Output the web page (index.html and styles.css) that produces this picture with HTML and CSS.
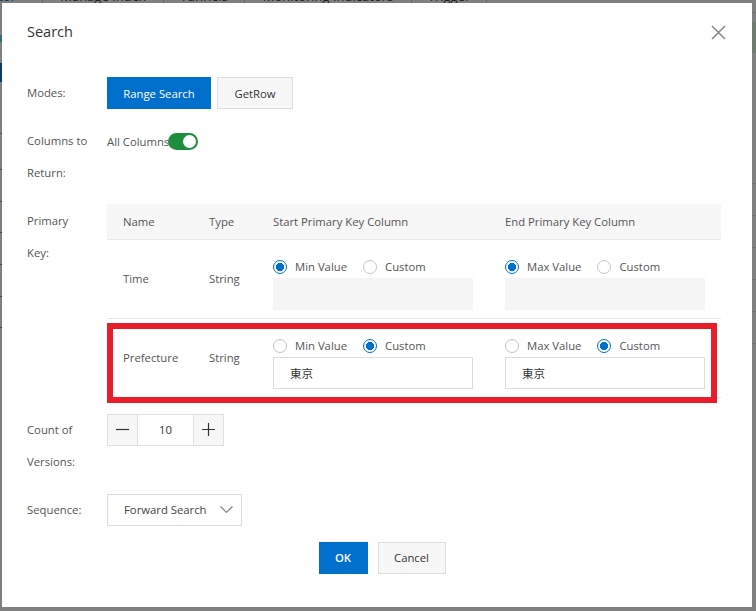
FILE: index.html
```html
<!DOCTYPE html>
<html lang="en">
<head>
<meta charset="utf-8">
<title>Search</title>
<link rel="stylesheet" href="styles.css">
</head>
<body>
<div class="page">
  <div class="tabs">
    <div class="tab tab-first">Data Editor</div>
    <div class="tab tab-w121">Manage Index</div>
    <div class="tab tab-w81">Tunnels</div>
    <div class="tab tab-w167">Monitoring Indicators</div>
    <div class="tab tab-w75">Trigger</div>
  </div>
</div>

<div class="modal">
  <div class="modal-header">
    <div class="modal-title">Search</div>
    <button class="close" aria-label="Close">
      <svg width="15" height="15" viewBox="0 0 15 15"><path d="M1 1 L14 14 M14 1 L1 14" stroke="#8a8a8a" stroke-width="1.6" fill="none"/></svg>
    </button>
  </div>

  <div class="modal-body">
    <div class="form-item">
      <div class="label">Modes:</div>
      <div class="control modes">
        <button class="btn btn-primary mode-range">Range Search</button>
        <button class="btn mode-get">GetRow</button>
      </div>
    </div>

    <div class="form-item tight">
      <div class="label">Columns to<br>Return:</div>
      <div class="control">
        <div class="switch-line">All Columns<span class="switch"><span class="knob"></span></span></div>
      </div>
    </div>

    <div class="form-item">
      <div class="label label-table">Primary<br>Key:</div>
      <div class="control">
        <table class="pk-table">
          <colgroup>
            <col class="c-name"><col class="c-type"><col class="c-range"><col class="c-range">
          </colgroup>
          <thead>
            <tr><th>Name</th><th>Type</th><th>Start Primary Key Column</th><th>End Primary Key Column</th></tr>
          </thead>
          <tbody>
            <tr>
              <td class="mid">Time</td>
              <td class="mid">String</td>
              <td>
                <div class="radios">
                  <span class="radio"><span class="dot checked"></span>Min Value</span>
                  <span class="radio"><span class="dot"></span>Custom</span>
                </div>
                <div class="input disabled"></div>
              </td>
              <td>
                <div class="radios">
                  <span class="radio"><span class="dot checked"></span>Max Value</span>
                  <span class="radio"><span class="dot"></span>Custom</span>
                </div>
                <div class="input disabled"></div>
              </td>
            </tr>
            <tr>
              <td class="mid">Prefecture</td>
              <td class="mid">String</td>
              <td>
                <div class="radios">
                  <span class="radio"><span class="dot"></span>Min Value</span>
                  <span class="radio"><span class="dot checked"></span>Custom</span>
                </div>
                <div class="input">東京</div>
              </td>
              <td>
                <div class="radios">
                  <span class="radio"><span class="dot"></span>Max Value</span>
                  <span class="radio"><span class="dot checked"></span>Custom</span>
                </div>
                <div class="input">東京</div>
              </td>
            </tr>
          </tbody>
        </table>
      </div>
    </div>

    <div class="form-item">
      <div class="label">Count of<br>Versions:</div>
      <div class="control">
        <div class="stepper">
          <button class="step-btn" aria-label="decrease"><svg width="13" height="13" viewBox="0 0 13 13"><path d="M0 6.5 H13" stroke="#333" stroke-width="1.2"/></svg></button>
          <div class="step-val">10</div>
          <button class="step-btn" aria-label="increase"><svg width="13" height="13" viewBox="0 0 13 13"><path d="M0 6.5 H13 M6.5 0 V13" stroke="#333" stroke-width="1.2"/></svg></button>
        </div>
      </div>
    </div>

    <div class="form-item">
      <div class="label">Sequence:</div>
      <div class="control">
        <div class="select">
          <span>Forward Search</span>
          <svg width="13" height="7" viewBox="0 0 13 7"><path d="M0.5 0.5 L6.5 6.3 L12.5 0.5" stroke="#777" stroke-width="1.1" fill="none"/></svg>
        </div>
      </div>
    </div>
  </div>

  <div class="modal-footer">
    <button class="btn btn-primary btn-ok">OK</button>
    <button class="btn btn-cancel">Cancel</button>
  </div>

  <div class="highlight"></div>
</div>
</body>
</html>
```

FILE: styles.css
```css
* { box-sizing: border-box; }

html, body {
  margin: 0;
  padding: 0;
}

body {
  width: 756px;
  height: 611px;
  overflow: hidden;
  font-family: "Open Sans", "Noto Sans CJK JP", sans-serif;
  background:
    linear-gradient(to bottom,
      transparent 0 35px, #3a6c78 35px 42px, transparent 42px 63px,
      #0b3d6c 63px 82px, transparent 82px 133px, #7a3d3d 133px 134px,
      transparent 134px 169px, #4a4a4a 169px 170px, transparent 170px 201px,
      #4a4a4a 201px 202px, transparent 202px 232px, #4a4a4a 232px 233px,
      transparent 233px 264px, #4a4a4a 264px 265px, transparent 265px 296px,
      #4a4a4a 296px 297px, transparent 297px 327px, #4a4a4a 327px 328px,
      transparent 328px) no-repeat 0 0 / 2px 611px,
    linear-gradient(to bottom,
      transparent 0 12px, #6e6e6e 12px 13px, transparent 13px 22px,
      #6f7a70 22px 53px, transparent 53px 183px, #707070 183px 184px,
      transparent 184px 215px, #707070 215px 216px, transparent 216px 247px,
      #707070 247px 248px, transparent 248px 279px, #707070 279px 280px,
      transparent 280px 311px, #707070 311px 312px, transparent 312px 343px,
      #707070 343px 344px, transparent 344px) no-repeat 752px 0 / 4px 611px,
    #808080;
}

/* background page (dimmed by the mask) */
.page {
  height: 611px;
}

.tabs {
  display: flex;
  margin-top: -12px;
  height: 16px;
  line-height: 16px;
  font-size: 13px;
  color: #1e1e1e;
  white-space: nowrap;
}

.tab {
  border-right: 1px solid #676767;
  text-align: center;
  flex: none;
}

.tab-first {
  width: 43px;
  display: flex;
  justify-content: flex-end;
  padding-right: 26px;
  color: #0d3b66;
}

.tab-w121 { width: 121px; }
.tab-w81 { width: 81px; }
.tab-w167 { width: 167px; }
.tab-w75 { width: 75px; }

/* modal */
.modal {
  position: absolute;
  left: 2px;
  top: 3px;
  width: 750px;
  height: 604px;
  background: #fff;
  display: flex;
  flex-direction: column;
}

.modal-header {
  display: flex;
  justify-content: space-between;
  align-items: center;
  padding: 18px 26px 0 25px;
  height: 41px;
}

.modal-title {
  font-size: 14.5px;
  line-height: 22px;
  color: #333;
  margin-top: -1px;
}

.close {
  border: 0;
  background: none;
  padding: 0;
  width: 15px;
  height: 15px;
  display: flex;
}

.modal-body {
  padding: 33px 31px 0 25px;
}

.form-item {
  display: flex;
  margin-bottom: 16px;
}

.form-item.tight {
  margin-bottom: 15px;
}

.label {
  width: 80px;
  flex: none;
  font-size: 11.3px;
  line-height: 32px;
  color: #555;
}

.label-table {
  padding-top: 1px;
}

.control {
  flex: 1;
  min-width: 0;
}

.modes {
  display: flex;
  gap: 6px;
}

.btn {
  height: 32px;
  font-family: inherit;
  font-size: 11.3px;
  border: 1px solid #dedede;
  background: #f7f7f7;
  color: #333;
  padding: 0 12px;
}

.btn-primary {
  background: #0070cc;
  border-color: #0070cc;
  color: #fff;
}

.mode-range { width: 104px; }
.mode-get { width: 76px; }

.switch-line {
  display: flex;
  align-items: center;
  height: 32px;
  font-size: 11.3px;
  color: #555;
}

.switch {
  width: 30px;
  height: 17px;
  border-radius: 9px;
  background: #1e8e3e;
  display: flex;
  justify-content: flex-end;
  align-items: center;
  padding-right: 2px;
  margin-left: -1px;
}

.knob {
  width: 13px;
  height: 13px;
  border-radius: 50%;
  background: #fff;
}

/* table */
.pk-table {
  width: 100%;
  border-collapse: collapse;
  table-layout: fixed;
  font-size: 11.3px;
  color: #555;
}

.c-name { width: 86px; }
.c-type { width: 64px; }
.c-range { width: 232px; }

.pk-table th {
  height: 35px;
  background: #f7f7f7;
  font-weight: normal;
  text-align: left;
  padding: 0 16px;
  border-bottom: 1px solid #e8e8e8;
}

.pk-table td {
  padding: 17px 16px 8px;
  border-bottom: 1px solid #e8e8e8;
  vertical-align: top;
}

.pk-table td.mid {
  vertical-align: middle;
  padding-top: 12px;
  padding-bottom: 12px;
}

.radios {
  display: flex;
  align-items: center;
  height: 20px;
  margin-bottom: 1px;
}

.radio {
  display: inline-flex;
  align-items: center;
  margin-right: 16px;
  color: #555;
}

.dot {
  width: 14px;
  height: 14px;
  border-radius: 50%;
  border: 1px solid #c4c4c4;
  background: #fff;
  margin-right: 8px;
  flex: none;
}

.dot.checked {
  border-color: #0070cc;
  background: radial-gradient(circle, #0070cc 0 3.8px, #fff 4.4px);
}

.input {
  height: 32px;
  width: 100%;
  border: 1px solid #dcdcdc;
  padding: 0 16px;
  line-height: 30px;
  font-size: 11.5px;
  color: #333;
  font-family: "Noto Sans CJK JP", "Open Sans", sans-serif;
}

.input.disabled {
  background: #f5f5f5;
  border-color: #f5f5f5;
}

/* stepper */
.stepper {
  display: flex;
  height: 32px;
}

.step-btn {
  width: 31px;
  height: 32px;
  border: 1px solid #e0e0e0;
  background: #f7f7f7;
  padding: 0;
  display: flex;
  align-items: center;
  justify-content: center;
}

.step-val {
  width: 55px;
  border-top: 1px solid #e0e0e0;
  border-bottom: 1px solid #e0e0e0;
  text-align: center;
  line-height: 30px;
  font-size: 11.3px;
  color: #333;
}

/* select */
.select {
  width: 135px;
  height: 32px;
  border: 1px solid #dcdcdc;
  display: flex;
  align-items: center;
  justify-content: space-between;
  padding: 0 8px 0 16px;
  font-size: 11.3px;
  color: #444;
}

/* footer */
.modal-footer {
  display: flex;
  justify-content: center;
  gap: 10px;
  padding-left: 10px;
}

.btn-ok {
  width: 49px;
  font-weight: 600;
}

.btn-cancel {
  width: 68px;
}

/* annotation overlay */
.highlight {
  position: absolute;
  left: 105px;
  top: 320px;
  width: 610px;
  height: 80px;
  border: 6px solid #e81f2a;
  pointer-events: none;
}
```
